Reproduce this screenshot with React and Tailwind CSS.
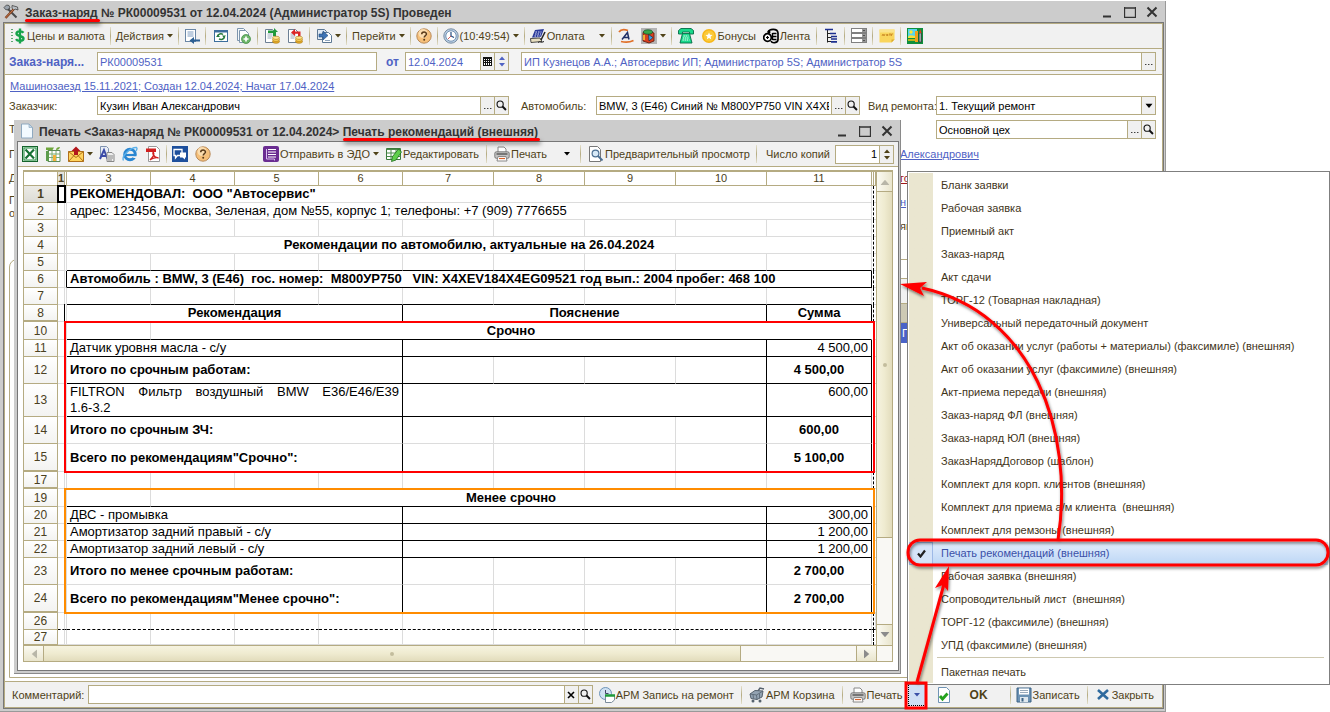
import React from 'react';
import clsx from 'clsx';

/* ---------- icons ---------- */

const Svg = ({ children, size = 16, className }) => (
  <svg width={size} height={size} viewBox="0 0 16 16" className={clsx('shrink-0', className)} aria-hidden="true">
    {children}
  </svg>
);

const ToolsIcon = () => (
  <Svg>
    <path d="M1 3.5 3.5 1 6 1.5 7 4 5 6 2.5 5.5z" fill="#9aa3ad" stroke="#444" strokeWidth=".8" />
    <path d="M5 5 13.5 13.5" stroke="#4a4a4a" strokeWidth="2" />
    <path d="M9 1.5 14.5 3 15 6 12 5 10.5 6.5 9 4z" fill="#b9bec4" stroke="#444" strokeWidth=".8" />
    <path d="M10.5 5.5 2.5 14" stroke="#7a3b1d" strokeWidth="2.4" />
    <path d="M10.5 5.5 2.5 14" stroke="#d78b5b" strokeWidth=".8" />
  </Svg>
);

const DollarIcon = () => (
  <Svg>
    <path d="M2 1v14" stroke="#2f8f4a" strokeWidth="1.5" strokeDasharray="1 2" />
    <path d="M13.5 4.8C12 2.8 6.5 2.8 6.5 5.7c0 2.8 7 1.8 7 4.8 0 3-6 3-7.5.6M10 .5v15" fill="none" stroke="#16a34a" strokeWidth="2.4" />
  </Svg>
);

const ListArrowIcon = () => (
  <Svg>
    <rect x="1.5" y="1.5" width="10" height="12" fill="#fff" stroke="#6a86a5" />
    <path d="M3.5 4h6M3.5 6h6M3.5 8h6" stroke="#7f9cc0" />
    <path d="M16 12.5H9" stroke="#2c5f93" strokeWidth="2" />
    <path d="M10 9v7L5.5 12.5z" fill="#2c5f93" />
  </Svg>
);

const RefreshIcon = () => (
  <Svg>
    <rect x="1.5" y="2.5" width="13" height="11" fill="#fff" stroke="#3c6e9c" />
    <path d="M1 3.5h14" stroke="#3c6e9c" strokeWidth="2" />
    <path d="M4.5 8A3.5 3 0 0 1 10 6.5M11.5 9A3.5 3 0 0 1 6 10.8" fill="none" stroke="#267a3c" strokeWidth="1.5" />
    <path d="M9 7.5h4L11 10zM3 9h4L5 6.5z" fill="#267a3c" />
  </Svg>
);

const AddCopyIcon = () => (
  <Svg>
    <path d="M2.5.5h6l3 3v9h-9z" fill="#f4f8fb" stroke="#7d95ad" />
    <path d="M4.5 2.5h6l3 3v9h-9z" fill="#fff" stroke="#7d95ad" />
    <circle cx="11" cy="11" r="4.5" fill="#6db56a" stroke="#3e8a3f" strokeWidth=".7" />
    <path d="M8.5 11h5M11 8.5v5" stroke="#fff" strokeWidth="1.7" />
  </Svg>
);

const PostDocIcon = ({ color, back }) => (
  <Svg>
    <path d="M1.5 1.5h7l3 3v10h-10z" fill="#fff" stroke="#6c7f94" />
    <path d="M3.5 6h5M3.5 8h5M3.5 10h4" stroke="#9ab" />
    {back ? (
      <path d="M13.5 8V3.5H8V1L4 4.5 8 8V5.8h3V8z" fill={color} />
    ) : (
      <path d="M4 2.5h6V0l4 4h-2v4H9V5H4z" fill={color} />
    )}
    <ellipse cx="12" cy="13.5" rx="3.5" ry="1.8" fill="#e8ae2a" stroke="#a67410" strokeWidth=".6" />
    <ellipse cx="12" cy="11.6" rx="3.5" ry="1.8" fill="#ffd75e" stroke="#a67410" strokeWidth=".6" />
    <ellipse cx="12" cy="9.8" rx="3.5" ry="1.6" fill="#ffe58c" stroke="#a67410" strokeWidth=".6" />
  </Svg>
);

const BasedOnIcon = () => (
  <Svg>
    <path d="M1.5 1.5h7l2 2v8h-9z" fill="#dfe9f4" stroke="#5d7894" />
    <path d="M6.5 4.5h6l3 3v7h-9z" fill="#fff" stroke="#5d7894" />
    <path d="M3 6h4V3l5 4.5L7 12V9H3z" fill="#3f74b5" stroke="#234d80" strokeWidth=".6" />
    <path d="M9 12.5h5" stroke="#8fa5bd" />
  </Svg>
);

const HelpIcon = () => (
  <Svg>
    <circle cx="8" cy="8" r="7.2" fill="#f6c07a" stroke="#b98a58" />
    <circle cx="7" cy="5.5" r="4.5" fill="#fde4bd" opacity=".8" />
    <path d="M5.7 6.3c0-3 4.8-2.9 4.8-.2 0 1.5-2.3 1.7-2.3 3.4" fill="none" stroke="#5c3c1a" strokeWidth="1.5" />
    <circle cx="8.2" cy="11.7" r="1" fill="#5c3c1a" />
  </Svg>
);

const ClockIcon = () => (
  <Svg>
    <circle cx="8" cy="8" r="7.2" fill="#b9cfe4" stroke="#7a8ea3" />
    <circle cx="8" cy="8" r="5.2" fill="#fff" stroke="#5d7fa6" strokeWidth=".8" />
    <path d="M8 4v4l3 1.5" fill="none" stroke="#234d80" strokeWidth="1.2" />
    <path d="M8 8 5 11" stroke="#c33" strokeWidth=".8" />
  </Svg>
);

const PayIcon = () => (
  <Svg>
    <path d="M5 2 14 1l-3 8L2 9.5z" fill="#2b3a99" />
    <path d="M5.5 4h6M5 6h6M4.5 8h6" stroke="#dfe3ff" strokeDasharray="1.5 1" />
    <path d="M.5 10.5 10 10l2 3.5L1 14.5z" fill="#e8dfc0" stroke="#222" strokeWidth=".8" />
    <path d="M15 4l-4 8" stroke="#222" strokeWidth="1.5" />
    <path d="M8 14.5c2-2 3 1 6-1" stroke="#222" fill="none" />
  </Svg>
);

const AutoIcon = () => (
  <Svg>
    <path d="M1 4c2-3 6-2.5 9-1.5" fill="none" stroke="#e07028" strokeWidth="1.8" />
    <path d="M3 13.5c4 1 9 .8 12.5-1" fill="none" stroke="#e07028" strokeWidth="1.8" />
    <path d="M4 11.5 9.5 4.5 11 11.5M6 9.5h5" fill="none" stroke="#1e2f66" strokeWidth="1.5" />
  </Svg>
);

const PartsIcon = () => (
  <Svg>
    <rect width="16" height="16" fill="#b5b5b5" />
    <path d="M2 4.5 7 3l6 2v8l-5 2-6-2z" fill="#d8401f" stroke="#5a1608" strokeWidth=".8" />
    <ellipse cx="7" cy="4" rx="4.5" ry="2.2" fill="#38a64c" stroke="#134d1f" strokeWidth=".7" />
    <path d="M7.5 6.5 12 9.5l-4 3.5z" fill="#3ea0e8" stroke="#123" strokeWidth=".6" />
    <path d="M3 7v5" stroke="#ffd43b" strokeWidth="1.5" />
  </Svg>
);

const PhoneIcon = () => (
  <Svg>
    <path d="M.5 2.5 3 .5h10l2.5 2V6h-4V4h-7v2h-4z" fill="#18d98b" stroke="#046b45" strokeWidth=".9" />
    <path d="M4.5 5.5h7l2.5 9.5H2z" fill="#18d98b" stroke="#046b45" strokeWidth=".9" />
    <path d="M5.5 8h5M5 10h6M4.5 12h7" stroke="#fff" strokeDasharray="1.3 .8" />
  </Svg>
);

const BonusIcon = () => (
  <Svg>
    <circle cx="8" cy="8" r="7" fill="#f7b718" />
    <circle cx="8" cy="8" r="5.5" fill="#fbc93a" />
    <path d="m8 4.5 1 2.3 2.5.3-1.9 1.7.5 2.4L8 10l-2.1 1.2.5-2.4-1.9-1.7L7 6.8z" fill="#fff" />
  </Svg>
);

const TapeIcon = () => (
  <Svg>
    <circle cx="4.5" cy="9.5" r="3.8" fill="#fff" stroke="#000" strokeWidth="1.7" />
    <path d="M3 9.5h3M4.5 8v3" stroke="#000" strokeWidth="1.2" />
    <path d="M5 4.5C6 .5 14.5 0 15 5v6.5c0 4-6 4-7 1.5" fill="none" stroke="#000" strokeWidth="1.7" />
    <path d="M9.5 5.5h4M9.5 8.5h4M9.5 11.5h4M9.5 5v7" stroke="#000" strokeWidth="1.4" />
    <circle cx="6" cy="4" r="1.5" />
  </Svg>
);

const TreeIcon = () => (
  <Svg>
    <path d="M3.5 2v12.5M3.5 5.5h4M3.5 9.5h4M3.5 13.5h4" fill="none" stroke="#222" />
    <path d="M1 1.5h8M6 5.5h6M7 8.5h6M7 11h6M7 13.8h6" stroke="#1d2f8f" strokeWidth="1.7" />
  </Svg>
);

const DrawersIcon = () => (
  <Svg>
    {[1, 6, 11].map((y) => (
      <g key={y}>
        <rect x=".5" y={y - 0.5} width="15" height="4" fill="#fff" stroke="#808080" />
        <rect x="11" y={y} width="4" height="3" fill="#9a9a9a" />
        <path d={`M12 ${y + 1}h2l-1 1.3z`} fill="#222" />
      </g>
    ))}
  </Svg>
);

const NoteIcon = () => (
  <Svg>
    <path d="M.5 1.5h15v10l-3 3H.5z" fill="#f9d55c" />
    <path d="M.5 1.5h15v3H.5z" fill="#fbe48c" />
    <path d="m3 8 1-2 1 2 1-2M7.5 6.5H9v1H7.5zM10 6h2M11 6v2M12.5 8V6H14" fill="none" stroke="#c07818" strokeWidth=".7" />
    <path d="M12.5 14.5v-3h3z" fill="#d9a92d" />
  </Svg>
);

const PictureIcon = () => (
  <Svg>
    <rect width="16" height="16" fill="#0f8f3c" />
    <rect x="1" y="1" width="9" height="8" fill="#55d5f0" />
    <circle cx="4" cy="4" r="1.7" fill="#ffe92e" />
    <path d="M1 9c3-4 6 1 9-2v3H1z" fill="#f5e03c" />
    <path d="M1 12h8" stroke="#f5c518" strokeWidth="1.5" />
    <rect x="8" y="3" width="3" height="11" fill="#f0a11b" />
    <rect x="12" y="5" width="2.5" height="9" fill="#9aa" stroke="#222" strokeWidth=".6" />
    <path d="m12 5 1.2-4L14.5 5z" fill="#e23b1f" />
  </Svg>
);

const PageIcon = () => (
  <Svg>
    <path d="M2.5 1H10l3.5 3.5V15h-11z" fill="#f3faff" stroke="#8fa9c0" />
    <path d="M10 1v3.5h3.5z" fill="#c6dbec" stroke="#8fa9c0" strokeWidth=".7" />
  </Svg>
);

const ExcelIcon = () => (
  <Svg>
    <rect x=".5" y=".5" width="15" height="15" fill="#d9efdc" stroke="#14642c" />
    <rect x="2" y="2" width="12" height="12" fill="#fff" stroke="#1f8a3f" />
    <path d="m3.5 3.5 8.5 9M12 3.5 3.5 12.5" stroke="#167034" strokeWidth="2.2" />
  </Svg>
);

const CalcIcon = () => (
  <Svg>
    <path d="M3 4.5h12v11H3z" fill="#fff" stroke="#5f8a58" />
    <path d="M3 8h12M3 11.5h12M7 5v10M11 5v10" stroke="#7aab72" />
    <path d="M1 1.5h8L7.5 4H1zM11 4c0-2 1.5-3 4-3-.5 2-1.5 3-4 3z" fill="#6ea63c" />
    <path d="M8 9h3v6H8z" fill="#f2b23a" />
    <path d="M1 5h3v10H1z" fill="#5d9c4d" />
  </Svg>
);

const MailIcon = () => (
  <Svg>
    <path d="M.5 5.5h15v10H.5z" fill="#ffd45e" stroke="#b0701a" />
    <path d="m.5 5.5 7.5 6 7.5-6M.5 15.5l5.5-6M15.5 15.5l-5.5-6" fill="none" stroke="#b0701a" />
    <path d="M8 .5 12.5 5H10v4H6V5H3.5z" fill="#b3171c" />
  </Svg>
);

const WordDocIcon = () => (
  <Svg>
    <path d="M1.5.5h6l2 2v8h-8z" fill="#e9eef6" stroke="#7f93b0" />
    <path d="m1 13 4-9 3.5 9M2.5 10h5" fill="none" stroke="#3b4ba8" strokeWidth="1.9" />
    <path d="M8 6.5h5l2 2v7H8z" fill="#eee" stroke="#888" />
    <path d="M9 10h5M9 12h5M9 14h4" stroke="#888" />
  </Svg>
);

const BrowserIcon = () => (
  <Svg>
    <circle cx="8" cy="8.5" r="5.3" fill="none" stroke="#2a86d1" strokeWidth="3" />
    <path d="M3 9h10.5" stroke="#2a86d1" strokeWidth="2.2" />
    <path d="M10.5 10.3h5v1.7h-4z" fill="#f0f0f0" />
    <path d="M1.5 14.5C-1 10 9 1 14.5 1.5c1 .8.5 2-.5 3.5" fill="none" stroke="#5bb0ea" strokeWidth="1.4" />
  </Svg>
);

const PdfIcon = () => (
  <Svg>
    <path d="M3.5.5h8l3 3v12h-11z" fill="#fff" stroke="#999" />
    <path d="M1 2.5h10V6H1z" fill="#d01f1f" />
    <path d="M5 14c3-3 4.5-6 3.5-7.5-1.5-.5-.5 5 5 5.5-3-1-7 .5-8.5 2z" fill="none" stroke="#d01f1f" strokeWidth="1.3" />
  </Svg>
);

const ChatIcon = () => (
  <Svg>
    <rect width="16" height="16" fill="#1d4f9c" />
    <path d="M2 3.5h8v6H5.5l-2 2.5V9.5H2z" fill="none" stroke="#fff" strokeWidth="1.3" />
    <path d="M8 6.5h6v5h-1v2l-2.5-2H8z" fill="#fff" />
  </Svg>
);

const EdoIcon = () => (
  <Svg>
    <rect width="16" height="16" rx="2" fill="#6a2c91" />
    <path d="M5 3.5h8M5 6h8M5 8.5h8M5 11h8" stroke="#fff" />
    <path d="M3.5 3v10h8v1.5" fill="none" stroke="#d9bdf0" />
  </Svg>
);

const EditGridIcon = () => (
  <Svg>
    <path d="M.5 2.5h14v11H.5z" fill="#fff" stroke="#3c7a3c" />
    <path d="M.5 3.5h14M.5 7h14M.5 10.5h14M5 3v10M10 3v10" stroke="#4a8a4a" />
    <path d="m12.500 3-6 7.500-1 5 4.500-1.500 5.500-8z" fill="#5fcf4b" stroke="#1d6b1a" strokeWidth=".8" />
  </Svg>
);

const PrinterIcon = () => (
  <Svg>
    <path d="M4 6V1h6l2 2v3" fill="#fff" stroke="#888" />
    <rect x=".8" y="5.8" width="14.4" height="6.5" rx="1.5" fill="#c4c4c4" stroke="#666" strokeWidth=".8" />
    <path d="M2.5 8h11" stroke="#444" strokeWidth="1.2" />
    <path d="M4 10.5h8l1 4.5H3z" fill="#fff" stroke="#888" />
    <path d="M5 12.5h6" stroke="#d9622b" strokeWidth="1.2" />
  </Svg>
);

const PreviewIcon = () => (
  <Svg>
    <path d="M1.5.5h8l3 3v12h-11z" fill="#fff" stroke="#777" />
    <circle cx="7.5" cy="7.5" r="3.4" fill="#d7e9f7" stroke="#4c6f92" strokeWidth="1.2" />
    <path d="m10 10 4.5 4.5" stroke="#4c6f92" strokeWidth="1.8" />
  </Svg>
);

const ScheduleIcon = () => (
  <Svg>
    <circle cx="6.5" cy="6.5" r="6" fill="#cfe1f2" stroke="#6d93b8" />
    <path d="M6.5 3v3.5h3" fill="none" stroke="#446" />
    <path d="M6.5 8.5h9V13l-3 2.5h-6z" fill="#fff" stroke="#7a8a9a" />
    <path d="M6 8.5h10" stroke="#1f9a3b" strokeWidth="2.5" />
  </Svg>
);

const CartIcon = () => (
  <Svg>
    <path d="M9 4 11 1l4 1" fill="none" stroke="#56626e" strokeWidth="1.4" />
    <path d="M1 7 6 3.500l8 .5-1 6-5 2.500-6-1z" fill="#93a3b2" stroke="#56626e" />
    <path d="m1 7 6.500 1L14 4M7.500 8l.5 4.500M4 7.500l.5 4M10.500 6.500v4.500" fill="none" stroke="#56626e" strokeWidth=".8" />
    <circle cx="4" cy="14" r="1.500" fill="#56626e" />
    <circle cx="11" cy="14" r="1.500" fill="#56626e" />
  </Svg>
);

const CheckDocIcon = () => (
  <Svg>
    <path d="M2.5.5h8l3 3v12h-11z" fill="#fff" stroke="#6f93b4" />
    <path d="m4 9 2.500 3L11.5 6.5" fill="none" stroke="#25a11e" strokeWidth="2.8" />
  </Svg>
);

const SaveIcon = () => (
  <Svg>
    <path d="M1 1h14v14H1z" fill="#6d93b4" stroke="#3d6385" />
    <rect x="3" y="1.5" width="10" height="6" fill="#fff" />
    <path d="M4 3.5h8M4 5.5h8" stroke="#9ab" />
    <rect x="4" y="10" width="8" height="5" fill="#dfe8ef" />
    <rect x="5.5" y="11" width="2" height="3.5" fill="#3d6385" />
  </Svg>
);

const SearchIcon = () => (
  <Svg size={11}>
    <circle cx="6" cy="6" r="4.5" fill="none" stroke="#111" strokeWidth="1.6" />
    <path d="m9.5 9.5 5 5" stroke="#111" strokeWidth="2.8" />
  </Svg>
);

const CalendarIcon = () => (
  <svg width="9" height="9" viewBox="0 0 9 9" shapeRendering="crispEdges" aria-hidden="true">
    <path d="M0 0h9v9H0z" fill="#111" />
    <path d="M1 2h1v1H1zM3 2h1v1H3zM5 2h1v1H5zM7 2h1v1H7zM1 4h1v1H1zM3 4h1v1H3zM5 4h1v1H5zM7 4h1v1H7zM1 6h1v2H1zM3 6h1v2H3zM5 6h1v2H5zM7 6h1v2H7z" fill="#fff" />
  </svg>
);

/* ---------- small controls ---------- */

const Caret = ({ className }) => (
  <svg width="6" height="4" viewBox="0 0 6 4" className={clsx('shrink-0', className)} aria-hidden="true">
    <path d="M0 0h6L3 3.5z" fill="currentColor" />
  </svg>
);

const Sep = ({ className = 'mx-[5px]' }) => (
  <span className={clsx('h-[18px] w-px shrink-0 bg-gradient-to-b from-[#e4e0cc] via-[#b5ab82] to-[#e4e0cc]', className)} />
);

const Tool = ({ icon, label, caret, className, ...rest }) => (
  <button
    type="button"
    className={clsx('flex h-5 shrink-0 items-center gap-px whitespace-nowrap', className)}
    aria-label={label ? undefined : 'tool'}
    {...rest}
  >
    {icon}
    {label && <span className="pt-px">{label}</span>}
    {caret && <Caret className="ml-[2px]" />}
  </button>
);

const FieldBtn = ({ children, label, className }) => (
  <button
    type="button"
    aria-label={label}
    className={clsx('flex w-[14px] shrink-0 items-center justify-center border-l border-[#b5ab82] bg-[#f0f0f0] text-black', className)}
  >
    {children}
  </button>
);

const Dots = () => (
  <FieldBtn label="Выбрать">
    <svg width="8" height="2" viewBox="0 0 8 2" className="mt-[5px]" shapeRendering="crispEdges">
      <path d="M0 1h1v1H0zM3 1h1v1H3zM6 1h1v1H6z" fill="#000" stroke="#555" strokeWidth=".5" />
    </svg>
  </FieldBtn>
);

const Spinner = ({ className }) => (
  <span className={clsx('flex w-[14px] shrink-0 flex-col items-center justify-between border-l border-[#b5ab82] bg-[#f0f0f0] py-[3px]', className)}>
    <button type="button" aria-label="Больше" className="block"><Caret className="block rotate-180" /></button>
    <button type="button" aria-label="Меньше" className="block"><Caret className="block" /></button>
  </span>
);

const Field = ({ id, value, label, className, inputClass, children }) => (
  <span className={clsx('flex h-[19px] border border-[#b5ab82] bg-white', className)}>
    <input id={id} aria-label={label} defaultValue={value} className={clsx('w-full min-w-0 flex-1 px-[2px] pt-px outline-none', inputClass)} />
    {children}
  </span>
);

const WindowButtons = () => (
  <span className="ml-auto flex items-center gap-[10px] pr-[6px] text-[#333]">
    {['M1 10.5h8', 'M.5 2h11M.5 1v10.5h11V1', 'M1.5 1.5l9 9M10.5 1.5l-9 9'].map((d, i) => (
      <button key={d} type="button" aria-label={['Свернуть', 'Развернуть', 'Закрыть'][i]}>
        <svg width="12" height="12" viewBox="0 0 12 12" className="block">
          <path d={d} fill="none" stroke="currentColor" strokeWidth={i === 1 ? 1.3 : 2} />
        </svg>
      </button>
    ))}
  </span>
);

const RedLine = ({ className }) => (
  <span className={clsx('absolute h-[3px] rounded-full bg-[#ff0000] shadow-[1px_3px_4px_rgba(0,0,0,0.5)]', className)} />
);

/* ---------- spreadsheet ---------- */

const COLS = [34, 7, 2, 84, 84, 84, 84, 91, 91, 91, null, 105, 2, 2];

// line codes: g - grid, k - black, n - none
const LINES = { g: '#dcdcdc', k: '#000', n: 'transparent' };

const Td = ({ span, r = 'g', b = 'g', className, children }) => (
  <td
    colSpan={span}
    className={clsx('overflow-hidden border-r border-b p-0 whitespace-pre', className)}
    style={{ borderRightColor: LINES[r], borderBottomColor: LINES[b] }}
  >
    {children}
  </td>
);

const Row = ({ n, h, first, thick, left, children, dashed }) => (
  <tr style={{ height: h }}>
    <th
      className={clsx(
        'border-r border-b border-[#b5ab82] bg-gradient-to-b p-0 text-center text-[12px] leading-none text-[#4a4020]',
        first ? 'from-[#ecebe6] to-[#dddcd6] font-bold' : 'from-white to-[#f3f3f1] font-normal',
        thick && 'border-b-2'
      )}
    >
      {n}
    </th>
    {dashed ? (
      children
    ) : (
      <>
        <Td />
        <Td r={left} />
        {children}
        <td className="border-r border-dashed border-r-black p-0" />
        <td className="border-b border-[#dcdcdc] p-0" />
      </>
    )}
  </tr>
);

const BlankRow = ({ n, h = 17, bottom, thick }) => (
  <Row n={n} h={h} thick={thick}>
    {Array.from({ length: 9 }, (_, i) => <Td key={i} b={bottom} />)}
  </Row>
);

const GroupRow = ({ n, title }) => (
  <Row n={n} h={18}>
    <Td b="k" />
    <Td span={8} b="k" r="n" className="text-center font-bold">{title}</Td>
  </Row>
);

const ItemRow = ({ n, h = 17, name, sum, wrap }) => (
  <Row n={n} h={h}>
    <Td span={4} r="k" b="k" className={clsx('px-[3px]', wrap && 'text-justify whitespace-normal!')}>{name}</Td>
    <Td span={4} r="k" b="k" />
    <Td r="k" b="k" className="pr-[3px] text-right align-top">{sum}</Td>
  </Row>
);

const TotalRow = ({ n, h = 27, name, sum, line, thick }) => (
  <Row n={n} h={h} thick={thick}>
    <Td span={4} r="k" b={line} className="pl-[3px] font-bold">{name}</Td>
    <Td b={line} />
    <Td b={line} />
    <Td b={line} />
    <Td b={line} r="k" />
    <Td r="k" b={line} className="text-center font-bold">{sum}</Td>
  </Row>
);

const Sheet = () => (
  <div className="border border-t-2 border-[#b5ab82]">
    <div className="flex">
      <div className="relative min-w-0 flex-1">
        <table className="w-full table-fixed border-separate border-spacing-0 text-[13px] leading-4 text-black">
          <colgroup>
            {COLS.map((w, i) => <col key={i} style={w ? { width: w } : undefined} />)}
          </colgroup>
          <thead>
            <tr className="h-[14px] text-[11px] leading-[13px] text-[#4a4020]">
              {['', '1', '', '3', '4', '5', '6', '7', '8', '9', '10', '11', '', ''].map((c, i) => (
                <th key={i} className={clsx('overflow-hidden border-r border-b border-[#b5ab82] p-0', i === 1 ? 'bg-[#e4e3de] font-bold' : 'bg-white font-normal')}>
                  {c}
                </th>
              ))}
            </tr>
          </thead>
          <tbody>
            <Row n="1" h={17} first><Td span={9} className="pl-[3px] font-bold">{'РЕКОМЕНДОВАЛ:  ООО "Автосервис"'}</Td></Row>
            <Row n="2" h={17}><Td span={9} className="pl-[3px]">адрес: 123456, Москва, Зеленая, дом №55, корпус 1; телефоны: +7 (909) 7776655</Td></Row>
            <BlankRow n="3" />
            <Row n="4" h={17}><Td span={9} className="text-center font-bold">Рекомендации по автомобилю, актуальные на 26.04.2024</Td></Row>
            <BlankRow n="5" bottom="k" />
            <Row n="6" h={17} left="k">
              <Td span={9} r="k" b="k" className="pl-[3px] font-bold">{'Автомобиль : BMW, 3 (E46)  гос. номер:  М800УР750   VIN: X4XEV184X4EG09521 год вып.: 2004 пробег: 468 100'}</Td>
            </Row>
            <BlankRow n="7" bottom="k" />
            <Row n="8" h={17} thick>
              <Td span={4} r="k" className="text-center font-bold">Рекомендация</Td>
              <Td span={4} r="k" className="text-center font-bold">Пояснение</Td>
              <Td r="k" className="text-center font-bold">Сумма</Td>
            </Row>
            <GroupRow n="10" title="Срочно" />
            <ItemRow n="11" name="Датчик уровня масла - с/у" sum="4 500,00" />
            <TotalRow n="12" name="Итого по срочным работам:" sum="4 500,00" line="k" />
            <ItemRow
              n="13"
              h={33}
              name={<>FILTRON Фильтр воздушный BMW E36/E46/E39 <span className="whitespace-nowrap">1.6-3.2</span></>}
              sum="600,00"
              wrap
            />
            <TotalRow n="14" name="Итого по срочным ЗЧ:" sum="600,00" />
            <TotalRow n="15" h={28} name={'Всего по рекомендациям"Срочно":'} sum="5 100,00" thick />
            <BlankRow n="17" thick />
            <GroupRow n="19" title="Менее срочно" />
            <ItemRow n="20" name="ДВС - промывка" sum="300,00" />
            <ItemRow n="21" name="Амортизатор задний правый - с/у" sum="1 200,00" />
            <ItemRow n="22" name="Амортизатор задний левый - с/у" sum="1 200,00" />
            <TotalRow n="23" name="Итого по менее срочным работам:" sum="2 700,00" />
            <TotalRow n="24" h={28} name={'Всего по рекомендациям"Менее срочно":'} sum="2 700,00" thick />
            <Row n="26" h={17} dashed>
              {Array.from({ length: 13 }, (_, i) => (
                <td key={i} className={clsx('border-r border-b border-b-black p-0 [border-bottom-style:dashed]', i === 11 ? 'border-r-black [border-right-style:dashed]' : 'border-r-[#dcdcdc]')} />
              ))}
            </Row>
            <BlankRow n="27" h={15} />
          </tbody>
        </table>
        {/* active cell and group frames */}
        <div className="absolute top-[13px] left-[33px] h-[18px] w-[9px] border-2 border-black" />
        <div className="absolute top-[132px] left-[40px] h-[17px] w-px bg-black" />
        <div className="absolute top-[149px] right-px left-[40px] h-[152px] border-2 border-[#ff0000]" />
        <div className="absolute top-[316px] right-px left-[40px] h-[126px] border-2 border-[#ff8c00]" />
      </div>
      <div className="flex w-4 shrink-0 flex-col border-l border-[#b5ab82] bg-[#f9f8f4]">
        <button type="button" aria-label="Вверх" className="flex h-5 items-center justify-center border-b border-[#b5ab82] bg-gradient-to-r from-[#fbfaf2] to-[#e9e5cd] text-[#b8b6a8]">
          <Caret className="rotate-180 scale-150" />
        </button>
        <div className="flex h-[346px] items-center justify-center border-b border-[#b5ab82] bg-gradient-to-r from-[#f6f3e0] via-[#efebd0] to-[#e2dcbc]">
          <i className="size-1 rounded-full bg-[#c3bd9d]" />
        </div>
        <div className="flex-1" />
        <button type="button" aria-label="Вниз" className="flex h-[21px] items-center justify-center border-t border-[#b5ab82] bg-gradient-to-r from-[#fbfaf2] to-[#e9e5cd] text-[#8b8b8b]">
          <Caret className="scale-150" />
        </button>
      </div>
    </div>
    <div className="flex h-4 border-t border-[#b5ab82] bg-[#f9f8f4]">
      <button type="button" aria-label="Влево" className="flex w-5 items-center justify-center border-r border-[#b5ab82] bg-gradient-to-b from-[#fbfaf2] to-[#e9e5cd] text-[#b8b6a8]">
        <Caret className="scale-150 rotate-90" />
      </button>
      <div className="flex flex-1 items-center justify-center border-r border-[#b5ab82] bg-gradient-to-b from-[#f6f3e0] via-[#efebd0] to-[#e2dcbc]">
        <i className="size-1 rounded-full bg-[#c3bd9d]" />
      </div>
      <div className="w-[115px]" />
      <button type="button" aria-label="Вправо" className="flex w-[21px] items-center justify-center border-x border-[#b5ab82] bg-gradient-to-b from-[#fbfaf2] to-[#e9e5cd] text-[#8b8b8b]">
        <Caret className="scale-150 -rotate-90" />
      </button>
      <div className="w-[15px]" />
    </div>
  </div>
);

/* ---------- windows ---------- */

const PrintDialog = () => (
  <section className="absolute top-[120px] right-[429px] left-[14px] border-r border-b border-[#8a8a8a] bg-[#ccc] pr-px pb-[2px] pl-[3px]">
    <header className="relative flex h-[21px] items-center pl-[2px]">
      <PageIcon />
      <h2 className="ml-[4px] pt-[2px] text-[12px] font-bold whitespace-nowrap text-[#333]">
        Печать &lt;Заказ-наряд № РК00009531 от 12.04.2024&gt;{' '}
        <span className="relative inline-block">
          Печать рекомендаций (внешняя)
          <RedLine className="top-[15px] right-[-2px] left-0" />
        </span>
      </h2>
      <WindowButtons />
    </header>
    <div className="border border-[#777] bg-white">
      <div className="flex h-[25px] items-center border-b border-[#b5ab82] bg-[#f1f1f1] pl-[4px]">
        <Tool icon={<ExcelIcon />} />
        <Tool icon={<CalcIcon />} className="ml-[7px]" />
        <Tool icon={<MailIcon />} caret className="ml-[7px]" />
        <Tool icon={<WordDocIcon />} className="ml-[6px]" />
        <Tool icon={<BrowserIcon />} className="ml-[7px]" />
        <Tool icon={<PdfIcon />} className="ml-[7px]" />
        <Sep />
        <Tool icon={<ChatIcon />} />
        <Tool icon={<HelpIcon />} className="ml-[7px]" />
        <Tool icon={<EdoIcon />} label="Отправить в ЭДО" caret className="ml-[52px]" />
        <Tool icon={<EditGridIcon />} label="Редактировать" className="ml-[7px]" />
        <Sep className="mx-[7px]" />
        <Tool icon={<PrinterIcon />} label="Печать" />
        <Caret className="mx-[17px] text-black" />
        <Sep className="mr-[7px] -ml-[7px]" />
        <Tool icon={<PreviewIcon />} label="Предварительный просмотр" />
        <Sep className="mx-[6px]" />
        <label htmlFor="copies" className="ml-auto pt-px pr-[5px] whitespace-nowrap">Число копий</label>
        <Field id="copies" value="1" className="mr-[4px] w-[59px] shrink-0" inputClass="text-right text-black"><Spinner /></Field>
      </div>
      <div className="px-[5px] pt-[3px] pb-[8px]"><Sheet /></div>
    </div>
  </section>
);

const MENU = [
  'Бланк заявки',
  'Рабочая заявка',
  'Приемный акт',
  'Заказ-наряд',
  'Акт сдачи',
  'ТОРГ-12 (Товарная накладная)',
  'Универсальный передаточный документ',
  'Акт об оказании услуг (работы + материалы) (факсимиле) (внешняя)',
  'Акт об оказании услуг (факсимиле) (внешняя)',
  'Акт-приема передачи (внешняя)',
  'Заказ-наряд ФЛ (внешняя)',
  'Заказ-наряд ЮЛ (внешняя)',
  'ЗаказНарядДоговор (шаблон)',
  'Комплект для корп. клиентов (внешняя)',
  'Комплект для приема а/м клиента  (внешняя)',
  'Комплект для ремзоны (внешняя)',
  'Печать рекомендаций (внешняя)',
  'Рабочая заявка (внешняя)',
  'Сопроводительный лист  (внешняя)',
  'ТОРГ-12 (факсимиле) (внешняя)',
  'УПД (факсимиле) (внешняя)',
];

const PrintMenu = () => (
  <div role="menu" className="absolute top-[171px] right-0 w-[423px] border border-[#7f7f7f] bg-white p-px text-[#3f351a]">
    <div className="bg-gradient-to-r from-[#eae6d0] from-[24px] to-white to-[24px] pt-px">
      {MENU.map((item) => {
        const active = item.startsWith('Печать');
        return (
          <button
            key={item}
            type="button"
            role="menuitem"
            className={clsx('flex h-[23px] w-full items-center whitespace-pre', active && 'bg-gradient-to-b from-[#e3eefc] to-[#bcd6f5] text-[#3a50a8]')}
          >
            <span className={clsx('flex h-full w-6 items-center justify-center', active && 'border border-[#9db9e6] bg-[#d5e4f8]')}>
              {active && (
                <svg width="9" height="9" viewBox="0 0 9 9"><path d="m1 4.5 2.5 3L8 1.5" fill="none" stroke="#222" strokeWidth="2.2" /></svg>
              )}
            </span>
            <span className="pl-[8px]">{item}</span>
          </button>
        );
      })}
      <div className="pl-[28px]"><div className="mr-[4px] h-px bg-[#cdc8b0]" /></div>
      <button type="button" role="menuitem" className="mt-[3px] flex h-[22px] items-center pl-[32px]">Пакетная печать</button>
    </div>
  </div>
);

const Annotations = () => (
  <svg width="430" height="712" viewBox="900 0 430 712" className="pointer-events-none absolute top-0 right-0" aria-hidden="true">
    <defs>
      <filter id="shade" x="-20%" y="-20%" width="140%" height="140%">
        <feDropShadow dx="1" dy="2" stdDeviation="1.5" floodOpacity=".5" />
      </filter>
    </defs>
    <g fill="none" stroke="#ff0000" strokeWidth="3" filter="url(#shade)">
      <rect x="908" y="540" width="420" height="25" rx="12" />
      <path d="M1058 540C1075 430 1032 312 922 288" />
      <path d="M900 284 927 282 920 288 924 296z" fill="#ff0000" stroke="none" />
      <path d="M917 682 944 584" />
      <path d="M949 566 948 591 943 585 935 588z" fill="#ff0000" stroke="none" />
    </g>
    <rect x="906" y="683" width="20" height="25" fill="none" stroke="#ff0000" strokeWidth="3" />
  </svg>
);

const MainToolbar = () => (
  <div className="flex h-[25px] items-center border-b border-[#b5ab82] bg-[#f1f1f1] pl-[5px]">
    <Tool icon={<DollarIcon />} label="Цены и валюта" />
    <Sep />
    <Tool label="Действия" caret />
    <Sep />
    <Tool icon={<ListArrowIcon />} />
    <Sep className="mr-[7px] ml-[5px]" />
    <Tool icon={<RefreshIcon />} />
    <Tool icon={<AddCopyIcon />} className="ml-[6px]" />
    <Sep className="mx-[6px]" />
    <Tool icon={<PostDocIcon color="#1f9a3b" />} />
    <Tool icon={<PostDocIcon color="#dc2626" back />} className="ml-[7px]" />
    <Sep className="mx-[6px]" />
    <Tool icon={<BasedOnIcon />} caret />
    <Sep />
    <Tool label="Перейти" caret />
    <Sep />
    <Tool icon={<HelpIcon />} />
    <Sep />
    <Tool icon={<ClockIcon />} label="(10:49:54)" caret />
    <Sep />
    <Tool icon={<PayIcon />} label="Оплата" />
    <Caret className="mr-[6px] ml-[14px]" />
    <Sep className="mr-[6px]" />
    <Tool icon={<AutoIcon />} />
    <Tool icon={<PartsIcon />} caret className="ml-[7px]" />
    <Sep className="mr-[6px] ml-[5px]" />
    <Tool icon={<PhoneIcon />} />
    <Tool icon={<BonusIcon />} label="Бонусы" className="ml-[7px]" />
    <Tool icon={<TapeIcon />} label="Лента" className="ml-[7px]" />
    <Sep className="mr-[7px] ml-[6px]" />
    <Tool icon={<TreeIcon />} />
    <Sep className="mr-[6px] ml-[4px]" />
    <Tool icon={<DrawersIcon />} />
    <Sep className="mr-[6px] ml-[5px]" />
    <Tool icon={<NoteIcon />} />
    <Sep className="mr-[6px] ml-[5px]" />
    <Tool icon={<PictureIcon />} />
  </div>
);

const App = () => {
  return (
    <main className="relative min-h-screen bg-white pt-px font-['Liberation_Sans',Arial,sans-serif] text-[11px] text-[#4f4218]">
      <section className="flex min-h-[calc(100vh-1px)] w-[calc(100%-164px)] flex-col border-r border-b border-[#999] bg-[#ccc] pr-px pb-[2px] pl-[3px]">
        <header className="relative flex h-[21px] items-center">
          <ToolsIcon />
          <h1 className="ml-[6px] pt-[2px] text-[12px] font-bold whitespace-nowrap text-[#333]">
            <span className="relative inline-block">
              Заказ-наряд
              <RedLine className="top-[15px] right-[-2px] left-0" />
            </span>{' '}
            № РК00009531 от 12.04.2024 (Администратор 5S) Проведен
          </h1>
          <WindowButtons />
        </header>

        <div className="flex flex-1 flex-col border border-[#777] bg-white">
          <div className="flex flex-1 flex-col border border-[#b5ab82]">
            <MainToolbar />

            <div className="flex h-[26px] items-center border-b border-[#b5ab82] bg-[#f3f3f3] pr-[6px] pl-[4px] text-[#4f62c4]">
              <label htmlFor="number" className="w-[88px] shrink-0 text-[12px] font-bold">Заказ-наря...</label>
              <Field id="number" value="РК00009531" className="w-[280px] shrink-0" />
              <label htmlFor="date" className="w-[28px] shrink-0 pl-[9px] text-[12px] font-bold">от</label>
              <Field id="date" value="12.04.2024" className="w-[104px] shrink-0">
                <FieldBtn label="Календарь"><CalendarIcon /></FieldBtn>
                <Spinner />
              </Field>
              <Field label="Организация" value="ИП Кузнецов А.А.; Автосервис ИП; Администратор 5S; Администратор 5S" className="ml-[12px] flex-1">
                <Dots />
              </Field>
            </div>

            <div className="flex h-[21px] items-center pt-px pl-[5px]">
              <a href="#visit" className="text-[#4f62c4] underline">Машинозаезд 15.11.2021; Создан 12.04.2024; Начат 17.04.2024</a>
            </div>

            <div className="flex items-center pr-[6px] pl-[4px]">
              <label htmlFor="customer" className="w-[88px] shrink-0 pt-px">Заказчик:</label>
              <Field id="customer" value="Кузин Иван Александрович" className="w-[412px] shrink-0" inputClass="text-black">
                <Dots />
                <FieldBtn label="Найти"><SearchIcon /></FieldBtn>
              </Field>
              <label htmlFor="car" className="ml-[12px] w-[75px] shrink-0 pt-px">Автомобиль:</label>
              <Field id="car" value="BMW, 3 (E46) Синий № М800УР750 VIN X4XEV184X4EG09521" className="w-[264px] shrink-0" inputClass="text-black">
                <Dots />
                <FieldBtn label="Найти"><SearchIcon /></FieldBtn>
              </Field>
              <label htmlFor="kind" className="ml-[8px] w-[68px] shrink-0 pt-px whitespace-nowrap">Вид ремонта:</label>
              <span className="relative flex h-[19px] flex-1 border border-[#b5ab82]">
                <select id="kind" className="w-full appearance-none bg-white px-[2px] pt-px text-black outline-none">
                  <option>1. Текущий ремонт</option>
                </select>
                <span className="pointer-events-none absolute inset-y-0 right-0 flex w-[14px] items-center justify-center border-l border-[#b5ab82] bg-[#f0f0f0] text-black">
                  <Caret className="scale-125" />
                </span>
              </span>
            </div>

            <div className="mt-[5px] flex items-center justify-end pr-[6px]">
              <span className="mr-auto pl-[4px]">Т</span>
              <Field label="Цех" value="Основной цех" className="w-[220px]" inputClass="text-black">
                <Dots />
                <FieldBtn label="Найти"><SearchIcon /></FieldBtn>
              </Field>
            </div>

            <div className="flex justify-between pr-[6px] pl-[4px]">
              <div className="flex w-3 flex-col gap-[8px] pt-[7px] leading-4">
                <span>П</span>
                <span>Д</span>
                <span className="leading-[13px]">П<br />о</span>
              </div>
              <div className="flex w-[256px] flex-col items-start gap-[8px] pt-[7px] leading-4">
                <a href="#manager" className="text-[#4f62c4] underline">Александрович</a>
                <a href="#debt" className="text-[#a01818] underline">го</a>
                <a href="#contact" className="text-[#4f62c4] underline">н</a>
                <span>ян</span>
              </div>
            </div>

            <div className="mx-[4px] mt-[25px] mb-[3px] flex flex-1 justify-end rounded-t-lg border border-[#b5ab82]">
              <div className="mt-[18px] w-[256px]">
                <div className="h-[25px] border-t border-[#b5ab82] bg-[#f1f1f1]" />
                <div className="h-5 border-y border-[#b5ab82] bg-[#cdc9b4]" />
                <div className="h-5 bg-[#4a63c8] pl-px leading-5 text-white">Пе</div>
              </div>
            </div>

            <footer className="flex h-[26px] items-center border-t border-[#b5ab82] bg-[#f1f1f1] pr-[8px] pl-[7px]">
              <label htmlFor="comment" className="w-[76px] shrink-0 pt-px">Комментарий:</label>
              <Field id="comment" value="" className="flex-1">
                <FieldBtn label="Очистить">
                  <svg width="8" height="8" viewBox="0 0 8 8"><path d="m1 1 6 6M7 1 1 7" stroke="#000" strokeWidth="1.6" /></svg>
                </FieldBtn>
                <FieldBtn label="Найти"><SearchIcon /></FieldBtn>
              </Field>
              <Tool icon={<ScheduleIcon />} label="АРМ Запись на ремонт" className="ml-[6px]" />
              <Sep className="mx-[7px]" />
              <Tool icon={<CartIcon />} label="АРМ Корзина" />
              <Sep className="mx-[7px]" />
              <Tool icon={<PrinterIcon />} label="Печать" />
              <button type="button" aria-label="Печатные формы" className="ml-[5px] flex h-[22px] w-[18px] shrink-0 items-center justify-center border border-dotted border-black bg-[#cfdff5] text-[#3a50a8]">
                <Caret />
              </button>
              <Tool icon={<CheckDocIcon />} className="ml-[10px]" />
              <button type="button" className="w-[54px] shrink-0 pt-px text-center text-[12px] font-bold">OK</button>
              <Sep className="mr-[5px] ml-[4px]" />
              <Tool icon={<SaveIcon />} label="Записать" />
              <Sep className="mx-[7px]" />
              <Tool
                icon={<Svg><path d="m3 3 10 9M13 3 3 12" stroke="#2f6a9e" strokeWidth="2.6" /></Svg>}
                label="Закрыть"
              />
            </footer>
          </div>
        </div>
      </section>

      <PrintDialog />
      <PrintMenu />
      <Annotations />
    </main>
  );
};

export default App;
